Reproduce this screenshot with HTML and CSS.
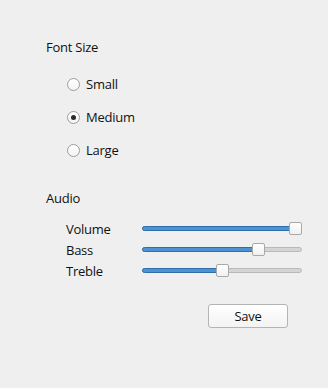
FILE: index.html
```html
<!DOCTYPE html>
<html lang="en">
<head>
    <meta charset="UTF-8">
    <meta name="viewport" content="width=device-width, initial-scale=1.0">
    <title>Settings</title>
    <link rel="stylesheet" href="styles.css">
</head>
<body>
    <div class="panel">
        <div class="group-title">Font Size</div>
        <div class="radio-list">
            <label class="radio-row"><input type="radio" name="font-size" value="small"> Small</label>
            <label class="radio-row"><input type="radio" name="font-size" value="medium" checked> Medium</label>
            <label class="radio-row"><input type="radio" name="font-size" value="large"> Large</label>
        </div>

        <div class="group-title audio-title">Audio</div>
        <div class="slider-list">
            <span class="slider-label">Volume</span>
            <div class="slider">
                <div class="slider-fill" style="width: 100%"></div>
                <div class="slider-thumb" style="left: 147px"></div>
            </div>
            <span class="slider-label">Bass</span>
            <div class="slider">
                <div class="slider-fill" style="width: 75%"></div>
                <div class="slider-thumb" style="left: 110px"></div>
            </div>
            <span class="slider-label">Treble</span>
            <div class="slider">
                <div class="slider-fill" style="width: 50%"></div>
                <div class="slider-thumb" style="left: 74px"></div>
            </div>
        </div>

        <div class="actions">
            <button class="btn">Save</button>
        </div>
    </div>
</body>
</html>
```

FILE: styles.css
```css
body {
    margin: 0;
    padding: 0;
    background-color: #efefef;
    font-family: "Open Sans", "Noto Sans", sans-serif;
    font-size: 13px;
    line-height: 16px;
    letter-spacing: -0.25px;
    color: #111111;
}

.panel {
    padding: 39px 40px 0 46px;
}

.group-title {
    height: 16px;
}

.radio-list {
    display: flex;
    flex-direction: column;
    gap: 13px;
    margin: 19px 0 0 21px;
}

.radio-row {
    display: flex;
    align-items: center;
    gap: 6px;
    height: 20px;
}

.radio-row input {
    appearance: none;
    -webkit-appearance: none;
    margin: 0;
    width: 13px;
    height: 13px;
    border: 1px solid #9d9d9d;
    border-radius: 50%;
    background: linear-gradient(#ffffff, #f4f4f4);
    box-sizing: border-box;
    display: flex;
    align-items: center;
    justify-content: center;
}

.radio-row input:checked::after {
    content: "";
    width: 5px;
    height: 5px;
    border-radius: 50%;
    background: #2a2a2a;
}

.audio-title {
    margin-top: 30px;
}

.slider-list {
    display: grid;
    grid-template-columns: 76px 160px;
    grid-auto-rows: 21px;
    align-items: center;
    margin: 12px 0 0 20px;
}

.slider {
    position: relative;
    height: 5px;
    border: 1px solid #b9b9b9;
    border-radius: 3px;
    background: #d4d4d4;
    box-sizing: border-box;
}

.slider-fill {
    height: 100%;
    margin: -1px;
    border: 1px solid #2f6ea8;
    border-radius: 3px;
    background: #4b93d3;
}

.slider-thumb {
    position: absolute;
    top: -5px;
    width: 13px;
    height: 13px;
    margin-left: -1px;
    border: 1px solid #a9a9a9;
    border-radius: 2px;
    background: linear-gradient(#ffffff, #f1f1f1);
    box-sizing: border-box;
}

.actions {
    display: flex;
    justify-content: flex-end;
    margin-top: 23px;
}

.btn {
    width: 80px;
    height: 24px;
    font-family: inherit;
    font-size: 13px;
    letter-spacing: inherit;
    color: #111111;
    border: 1px solid #b4b4b4;
    border-radius: 3px;
    background: linear-gradient(#ffffff, #f3f3f3);
    padding: 0;
}
```
